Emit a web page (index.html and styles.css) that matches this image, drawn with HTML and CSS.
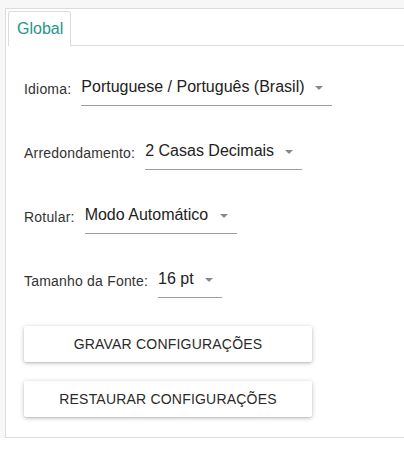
FILE: index.html
```html
<!DOCTYPE html>
<html>
<head>
<meta charset="utf-8">
<link rel="stylesheet" href="styles.css">
</head>
<body>
<div class="frame">
  <div class="panel">
    <div class="tabbar">
      <div class="tab">Global</div>
      <div class="tabrest"></div>
    </div>
    <div class="content">
      <div class="row">
        <span class="label">Idioma:</span>
        <div class="select w1"><span class="value">Portuguese / Português (Brasil)</span><span class="arrow"></span></div>
      </div>
      <div class="row">
        <span class="label">Arredondamento:</span>
        <div class="select w2"><span class="value">2 Casas Decimais</span><span class="arrow"></span></div>
      </div>
      <div class="row">
        <span class="label">Rotular:</span>
        <div class="select w3"><span class="value">Modo Automático</span><span class="arrow"></span></div>
      </div>
      <div class="row">
        <span class="label">Tamanho da Fonte:</span>
        <div class="select w4"><span class="value">16 pt</span><span class="arrow"></span></div>
      </div>
      <div class="buttons">
        <button class="btn">Gravar configurações</button>
        <button class="btn">Restaurar configurações</button>
      </div>
    </div>
  </div>
</div>
</body>
</html>
```

FILE: styles.css
```css
html, body {
  margin: 0;
  padding: 0;
  background: #ffffff;
  font-family: "Liberation Sans", Arial, sans-serif;
  color: #333;
}
.frame {
  background: #f7f7f7;
  padding-top: 8px;
  padding-left: 5px;
}
.panel {
  background: #fff;
  border-top: 1px solid #dcdcdc;
  border-left: 1px solid #dcdcdc;
  border-bottom: 1px solid #dcdcdc;
  height: 428px;
}
.tabbar {
  display: flex;
  align-items: flex-end;
  padding-top: 1px;
  height: 36px;
}
.tab {
  margin-left: 2px;
  height: 35px;
  box-sizing: border-box;
  padding: 0 7px 0 8px;
  border: 1px solid #dcdcdc;
  border-bottom: none;
  border-radius: 3px 3px 0 0;
  color: #26948a;
  font-size: 16px;
  line-height: 34px;
}
.tabrest {
  flex: 1;
  border-bottom: 1px solid #dcdcdc;
}
.content {
  padding: 26px 0 0 18px;
}
.row {
  display: flex;
  align-items: center;
  height: 34px;
  margin-bottom: 30px;
}
.label {
  font-size: 14px;
  letter-spacing: 0.2px;
  color: #333;
  margin-right: 10px;
}
.select {
  position: relative;
  height: 34px;
  box-sizing: border-box;
  border-bottom: 1px solid #9e9e9e;
  display: flex;
  align-items: center;
  font-size: 16px;
  color: #222;
}
.value {
  padding-bottom: 3px;
}
.arrow {
  position: absolute;
  right: 9px;
  top: 14px;
  width: 0;
  height: 0;
  border-left: 4px solid transparent;
  border-right: 4px solid transparent;
  border-top: 4px solid #8a8a8a;
}
.w1 { width: 251px; }
.w2 { width: 157px; }
.w3 { width: 152px; }
.w4 { width: 64px; }
.buttons {
  display: flex;
  flex-direction: column;
  gap: 19px;
  margin-top: -2px;
}
.btn {
  width: 288px;
  height: 36px;
  background: #fff;
  border: none;
  border-radius: 2px;
  box-shadow: 0 1px 5px rgba(0,0,0,0.22), 0 1px 2px rgba(0,0,0,0.12);
  font-family: "Liberation Sans", Arial, sans-serif;
  font-size: 14px;
  letter-spacing: 0.2px;
  text-transform: uppercase;
  color: #2a2a2a;
  padding: 0;
}
```
